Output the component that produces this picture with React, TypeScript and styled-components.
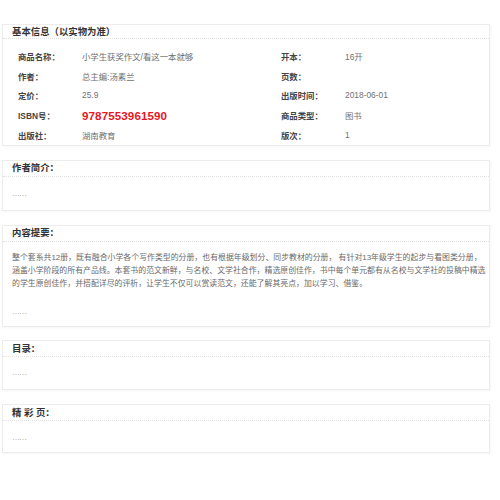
import React from "react";
import styled, { createGlobalStyle } from "styled-components";

const Global = createGlobalStyle`
  html, body { margin: 0; padding: 0; background: #fff; }
  body { font-family: "Liberation Sans", "Noto Sans CJK SC", sans-serif; }
`;

const Page = styled.div`
  width: 488px;
  padding: 24px 0 20px 2px;
  display: flex;
  flex-direction: column;
  gap: 13.8px;
`;

const Panel = styled.section`
  border: 1px solid #ececec;
  box-shadow: 1px 1px 2px rgba(0, 0, 0, 0.04);
  background: #fff;
`;

const Header = styled.div<{ $h: number }>`
  height: ${(p) => p.$h}px;
  display: flex;
  align-items: center;
  padding-left: 9px;
  border-bottom: 1px dotted #e2e2e2;
`;

const Title = styled.h3`
  margin: 0;
  font-size: 9.4px;
  font-weight: bold;
  color: #333;
  line-height: 12px;
  white-space: pre;
`;

const InfoGrid = styled.div`
  display: grid;
  grid-template-columns: 263px 1fr;
  padding: 7px 0 0 15px;
`;

const Cell = styled.div`
  display: flex;
  align-items: center;
  height: 19.8px;
  font-size: 8.4px;
`;

const Label = styled.span`
  width: 64px;
  flex: none;
  color: #444;
  font-weight: 600;
`;

const Value = styled.span<{ $isbn?: boolean }>`
  color: ${(p) => (p.$isbn ? "#e9151f" : "#707070")};
  font-weight: ${(p) => (p.$isbn ? "bold" : "normal")};
  font-size: ${(p) => (p.$isbn ? "11.6px" : "8.4px")};
  letter-spacing: ${(p) => (p.$isbn ? "0.1px" : "0")};
`;

const Body = styled.div<{ $pt: number; $pb: number }>`
  padding: ${(p) => p.$pt}px 3px ${(p) => p.$pb}px 9px;
  font-size: 7.9px;
  color: #6a6a6a;
`;

const Paragraph = styled.p`
  margin: 0 0 15.5px 0;
  line-height: 13px;
`;

const Dots = styled.div`
  line-height: 12px;
  height: 12px;
  color: #8a8a8a;
  font-size: 8px;
  letter-spacing: -1px;
`;

const rows: [string, string, boolean?][][] = [
  [["商品名称：", "小学生获奖作文/看这一本就够"], ["开本：", "16开"]],
  [["作者：", "总主编:汤素兰"], ["页数：", ""]],
  [["定价：", "25.9"], ["出版时间：", "2018-06-01"]],
  [["ISBN号：", "9787553961590", true], ["商品类型：", "图书"]],
  [["出版社：", "湖南教育"], ["版次：", "1"]],
];

const summary =
  "整个套系共12册，既有融合小学各个写作类型的分册，也有根据年级划分、同步教材的分册， 有针对13年级学生的起步与看图类分册，涵盖小学阶段的所有产品线。本套书的范文新鲜，与名校、文学社合作，精选原创佳作，书中每个单元都有从名校与文学社的投稿中精选的学生原创佳作，并搭配详尽的评析，让学生不仅可以赏读范文，还能了解其亮点，加以学习、借鉴。";

export default function App() {
  return (
    <>
      <Global />
      <Page>
        <Panel>
          <Header $h={13}>
            <Title>基本信息（以实物为准）</Title>
          </Header>
          <InfoGrid>
            {rows.flat().map(([l, v, isbn], i) => (
              <Cell key={i}>
                <Label>{l}</Label>
                <Value $isbn={isbn}>{v}</Value>
              </Cell>
            ))}
          </InfoGrid>
        </Panel>

        <Panel>
          <Header $h={15}>
            <Title>作者简介：</Title>
          </Header>
          <Body $pt={11} $pb={10}>
            <Dots>……</Dots>
          </Body>
        </Panel>

        <Panel>
          <Header $h={15}>
            <Title>内容提要：</Title>
          </Header>
          <Body $pt={9.5} $pb={8}>
            <Paragraph>{summary}</Paragraph>
            <Dots>……</Dots>
          </Body>
        </Panel>

        <Panel>
          <Header $h={15}>
            <Title>目录：</Title>
          </Header>
          <Body $pt={10} $pb={10}>
            <Dots>……</Dots>
          </Body>
        </Panel>

        <Panel>
          <Header $h={15}>
            <Title>{"精 彩 页："}</Title>
          </Header>
          <Body $pt={11} $pb={8}>
            <Dots>……</Dots>
          </Body>
        </Panel>
      </Page>
    </>
  );
}
